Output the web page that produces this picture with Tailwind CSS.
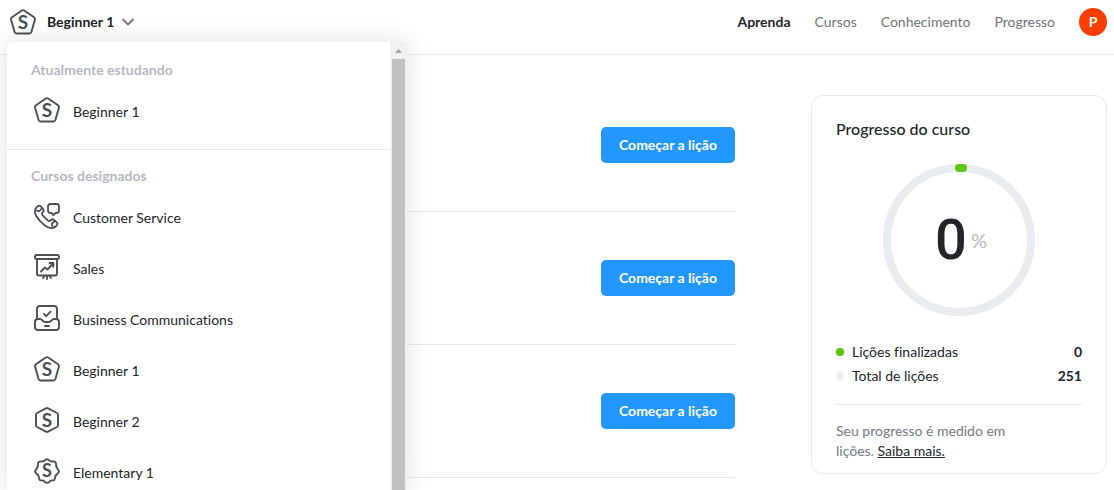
<!DOCTYPE html>
<html lang="pt-BR">

<head>
  <meta charset="UTF-8" />
  <meta name="viewport" content="width=device-width, initial-scale=1.0" />
  <script src="https://cdn.jsdelivr.net/npm/@tailwindcss/browser@4"></script>
  <title>Aprenda | Beginner 1</title>
</head>

<body class="min-h-screen bg-white text-[#222529] text-sm font-['Lato',sans-serif] [font-variant-ligatures:none]">
  <!-- Course icons -->
  <svg class="hidden" aria-hidden="true">
    <symbol id="icon-beginner-1" viewBox="0 0 26 26">
      <path d="M11.8 1.5Q13 .7 14.2 1.5L24 8.3Q25.300 9.300 24.900 10.800L21.400 23Q20.900 24.500 19.400 24.500H6.600Q5.100 24.500 4.600 23L1.100 10.800Q.7 9.300 2 8.300Z" fill="none" stroke="currentColor" stroke-width="1.9" stroke-linejoin="round" />
      <text x="13" y="20" text-anchor="middle" font-size="19" font-weight="700" fill="currentColor">S</text>
    </symbol>
    <symbol id="icon-beginner-2" viewBox="0 0 26 26">
      <path d="M12 1.300Q13 .8 14 1.300L23 6Q24 6.600 24 7.700V18.300Q24 19.400 23 20L14 24.700Q13 25.200 12 24.700L3 20Q2 19.400 2 18.300V7.700Q2 6.600 3 6Z" fill="none" stroke="currentColor" stroke-width="1.9" stroke-linejoin="round" />
      <text x="13" y="20" text-anchor="middle" font-size="19" font-weight="700" fill="currentColor">S</text>
    </symbol>
    <symbol id="icon-elementary-1" viewBox="0 0 26 26">
      <path d="M12 1.400Q13 .8 14 1.400L16.500 3.200L20.400 3.600Q21.700 3.900 21.900 5.200L22.400 9L24.700 12.700Q25.200 13.700 24.500 14.600L21.700 17.500L20.600 21.300Q20.100 22.500 18.900 22.400L16.500 22.600L14.800 24.400Q13 25 11.200 24.400L9.500 22.600L7.100 22.400Q5.900 22.500 5.400 21.300L4.300 17.500L1.500 14.600Q.8 13.700 1.300 12.700L3.600 9L4.100 5.200Q4.300 3.900 5.600 3.600L9.500 3.200Z" fill="none" stroke="currentColor" stroke-width="1.9" stroke-linejoin="round" />
      <text x="13" y="19" text-anchor="middle" font-size="18" font-weight="700" fill="currentColor">S</text>
    </symbol>
    <symbol id="icon-phone" viewBox="0 0 26 26">
      <g fill="none" stroke="currentColor" stroke-width="1.8" stroke-linecap="round" stroke-linejoin="round">
        <path d="M2.600 4.200C3.800 2.700 5.400 2.200 6.600 3.200L9.200 6.200C10 7.300 9.800 8.300 8.800 9.200C7.700 10.200 7.700 11.200 8.600 12.300L13.700 17.400C14.800 18.300 15.800 18.300 16.800 17.200C17.700 16.200 18.700 16 19.800 16.800L22.800 19.400C23.800 20.400 23.500 21.800 22.200 23C19 26 14.500 25.300 10.500 22.300C7.300 19.800 4.200 16.500 2.300 13C.4 9.500 .7 6.400 2.600 4.200Z" />
        <path d="M3 7.500C4.500 8.600 5.500 8.200 6.200 7.200C6.800 6.300 7.600 5.600 8.300 5.700M18.500 23C17.400 21.500 17.800 20.500 18.800 19.800C19.700 19.200 20.400 18.400 20.300 17.700" />
        <path d="M16.500 1H22.500Q25 1 25 3.500V7.500Q25 10 22.500 10H21.500L19.500 12L17.500 10H16.500Q14 10 14 7.500V3.500Q14 1 16.500 1Z" />
      </g>
    </symbol>
    <symbol id="icon-board" viewBox="0 0 26 26">
      <g fill="none" stroke="currentColor" stroke-width="1.9" stroke-linecap="round" stroke-linejoin="round">
        <rect x="1" y="1" width="24" height="4" rx="1.500" />
        <path d="M3 5V19.500Q3 21.500 5 21.500H21Q23 21.500 23 19.500V5" />
        <path d="M7 17.500L11 13.500L13.500 15.500L19 9.500M15.500 9H19.300V12.800" />
        <path d="M13 22V25M10.500 22L9 24M15.500 22L17 24" />
      </g>
    </symbol>
    <symbol id="icon-inbox" viewBox="0 0 26 26">
      <g fill="none" stroke="currentColor" stroke-width="1.900" stroke-linecap="round" stroke-linejoin="round">
        <path d="M3 14V4Q3 1 6 1H20Q23 1 23 4V14" />
        <path d="M1 17Q1 14 4 14H5.500Q7.500 14 8.500 15.500T11.500 17H14.500Q16.500 17 17.500 15.500T20.500 14H22Q25 14 25 17V22Q25 25 22 25H4Q1 25 1 22Z" />
        <path d="M10 9L12.300 11.200L16.500 6.700M11 21H15" />
      </g>
    </symbol>
  </svg>

  <header class="border-b border-[#e8e8ef]">
    <div class="relative flex justify-between items-center w-full max-w-[1100px] h-[54px] mx-auto pb-2.5">
      <button type="button" aria-expanded="true" aria-controls="course-menu" class="flex items-center pl-[3px] font-bold">
        <svg class="w-[26px] h-[26px] mr-[11px] text-[#4b5057]"><use href="#icon-beginner-1" /></svg>
        Beginner 1
        <svg class="w-3 h-2 ml-2 text-[#737b87]" viewBox="0 0 12 8" fill="none" stroke="currentColor" stroke-width="2" stroke-linecap="round" stroke-linejoin="round">
          <path d="M1 1.500L6 6.500L11 1.500" />
        </svg>
      </button>

      <nav class="flex items-center gap-6 text-[#70757c]">
        <a href="#" class="font-bold text-[#222529]">Aprenda</a>
        <a href="#">Cursos</a>
        <a href="#">Conhecimento</a>
        <a href="#">Progresso</a>
        <a href="#" class="flex items-center justify-center size-7 rounded-full bg-[#fa3e00] text-white font-bold">P</a>
      </nav>

      <!-- Course menu -->
      <div id="course-menu" class="absolute left-0 top-[42px] z-10 flex w-[400px] h-[calc(100vh-42px)] rounded-tl-md bg-white shadow-[0_0_24px_rgba(0,0,0,0.12)]">
        <div class="flex-1 overflow-hidden leading-5">
          <section class="px-6 pt-[18px] pb-3.5 border-b border-[#e8e8e8]">
            <h2 class="mb-1 font-bold text-[#b3bac3]">Atualmente estudando</h2>
            <a href="#" class="flex items-center gap-2.5 h-[51px]">
              <svg class="w-8 h-[26px] text-[#4b5057]"><use href="#icon-beginner-1" /></svg>
              <span class="pt-1">Beginner 1</span>
            </a>
          </section>
          <section class="px-6 pt-4">
            <h2 class="mb-1 font-bold text-[#b3bac3]">Cursos designados</h2>
            <ul>
              <li>
                <a href="#" class="flex items-center gap-2.5 h-[51px]">
                  <svg class="w-8 h-[26px] text-[#4b5057]"><use href="#icon-phone" /></svg>
                  <span class="pt-1">Customer Service</span>
                </a>
              </li>
              <li>
                <a href="#" class="flex items-center gap-2.5 h-[51px]">
                  <svg class="w-8 h-[26px] text-[#4b5057]"><use href="#icon-board" /></svg>
                  <span class="pt-1">Sales</span>
                </a>
              </li>
              <li>
                <a href="#" class="flex items-center gap-2.5 h-[51px]">
                  <svg class="w-8 h-[26px] text-[#4b5057]"><use href="#icon-inbox" /></svg>
                  <span class="pt-1">Business Communications</span>
                </a>
              </li>
              <li>
                <a href="#" class="flex items-center gap-2.5 h-[51px]">
                  <svg class="w-8 h-[26px] text-[#4b5057]"><use href="#icon-beginner-1" /></svg>
                  <span class="pt-1">Beginner 1</span>
                </a>
              </li>
              <li>
                <a href="#" class="flex items-center gap-2.5 h-[51px]">
                  <svg class="w-8 h-[26px] text-[#4b5057]"><use href="#icon-beginner-2" /></svg>
                  <span class="pt-1">Beginner 2</span>
                </a>
              </li>
              <li>
                <a href="#" class="flex items-center gap-2.5 h-[51px]">
                  <svg class="w-8 h-[26px] text-[#4b5057]"><use href="#icon-elementary-1" /></svg>
                  <span class="pt-1">Elementary 1</span>
                </a>
              </li>
            </ul>
          </section>
        </div>
        <!-- Scrollbar -->
        <div class="flex flex-col items-center w-[17px] bg-[#f1f1f1]" aria-hidden="true">
          <svg class="w-[17px] h-[17px] shrink-0" viewBox="0 0 17 17"><path d="M5 11L8.500 7L12 11Z" fill="#a3a3a3" /></svg>
          <div class="w-[13px] flex-1 bg-[#c1c1c1]"></div>
        </div>
      </div>
    </div>
  </header>

  <main class="flex items-start gap-[76px] w-full max-w-[1100px] mx-auto pb-3">
    <ul class="flex-1 pt-6">
      <li class="flex justify-end items-center h-[133px] border-b border-[#e8e8e8]">
        <button type="button" class="h-9 px-4 w-[134px] whitespace-nowrap rounded-[5px] bg-[#2197ff] text-white font-bold">Começar a lição</button>
      </li>
      <li class="flex justify-end items-center h-[133px] border-b border-[#e8e8e8]">
        <button type="button" class="h-9 px-4 w-[134px] whitespace-nowrap rounded-[5px] bg-[#2197ff] text-white font-bold">Começar a lição</button>
      </li>
      <li class="flex justify-end items-center h-[133px] border-b border-[#e8e8e8]">
        <button type="button" class="h-9 px-4 w-[134px] whitespace-nowrap rounded-[5px] bg-[#2197ff] text-white font-bold">Começar a lição</button>
      </li>
    </ul>

    <!-- Progress card -->
    <aside class="w-[296px] mt-10 px-6 pt-5 pb-3 border border-[#e8e8ef] rounded-xl">
      <h2 class="text-base leading-[26px] font-medium">Progresso do curso</h2>
      <div class="grid place-items-center mt-[22px]">
        <svg class="col-start-1 row-start-1 size-[152px]" viewBox="0 0 152 152" fill="none" stroke-width="8">
          <circle cx="76" cy="76" r="72" stroke="#e8ebef" />
          <path d="M76 4A72 72 0 0 1 80 4.100" stroke="#5dc902" stroke-linecap="round" />
        </svg>
        <div class="col-start-1 row-start-1 flex items-center gap-1 pl-1">
          <span class="text-[56px] leading-none font-medium font-['Roboto',sans-serif]">0</span>
          <span class="text-xl text-[#b3bac3]">%</span>
        </div>
      </div>
      <dl class="mt-6 leading-6">
        <div class="flex items-center">
          <span class="size-2 mr-2 rounded-full bg-[#5dc902]"></span>
          <dt>Lições finalizadas</dt>
          <dd class="ml-auto font-bold">0</dd>
        </div>
        <div class="flex items-center">
          <span class="size-2 mr-2 rounded-full bg-[#e8ebef]"></span>
          <dt>Total de lições</dt>
          <dd class="ml-auto font-bold">251</dd>
        </div>
      </dl>
      <p class="mt-4 pt-4 border-t border-[#e8e8e8] leading-5 text-[#737b87]">
        Seu progresso é medido em<br>
        lições. <a href="#" class="text-[#222529] underline">Saiba mais.</a>
      </p>
    </aside>
  </main>
</body>

</html>
